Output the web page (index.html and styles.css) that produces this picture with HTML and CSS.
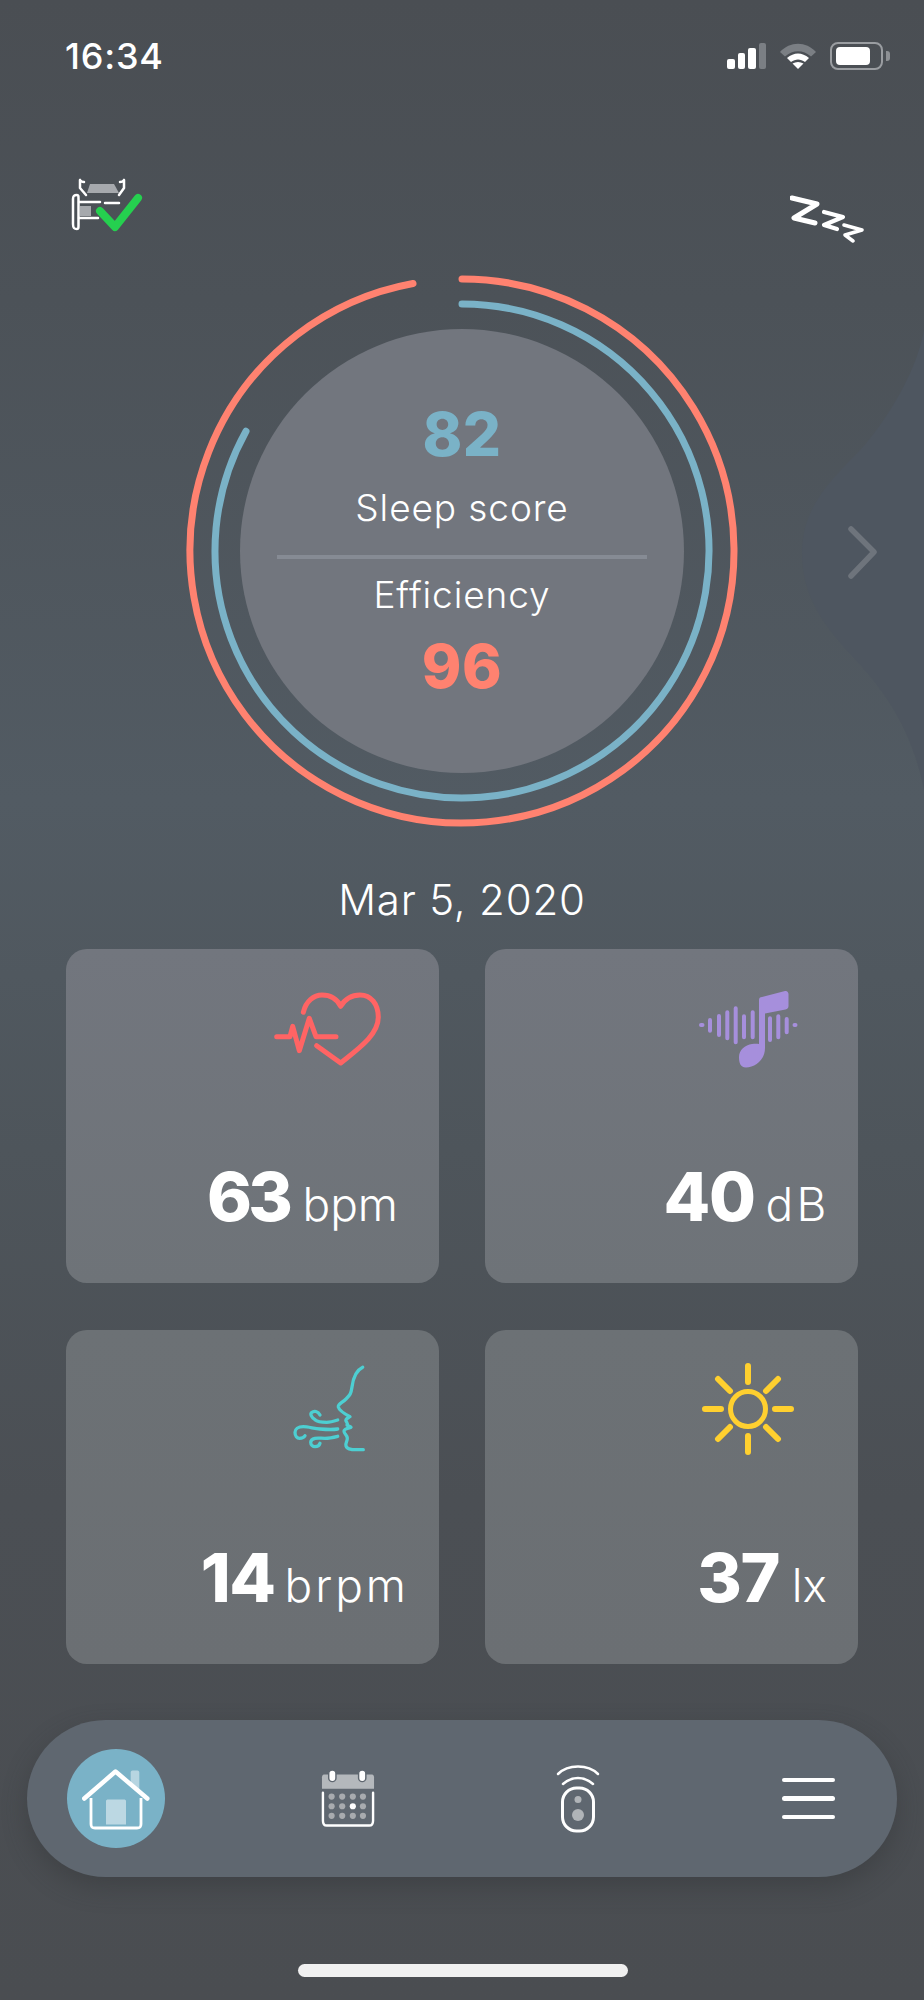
FILE: index.html
```html
<!DOCTYPE html>
<html lang="en">
<head>
<meta charset="utf-8">
<title>Sleep</title>
<link rel="stylesheet" href="styles.css">
</head>
<body>
<main class="screen">
  <svg class="wave" viewBox="0 0 124 460" aria-hidden="true">
    <path class="wave-shape" d="M124 0C118 34 96 78 63 117C34 148 2 174 2 223C2 268 26 298 53 327C86 362 112 400 124 460Z"/>
    <path class="chev" d="M51 199L74 222L51 246"/>
  </svg>

  <header class="status">
    <span class="time">16:34</span>
    <div class="status-icons">
      <div class="signal"><i class="b1"></i><i class="b2"></i><i class="b3"></i><i class="b4"></i></div>
      <svg class="wifi" viewBox="0 0 38 26">
        <path class="wifi-off" d="M1 9C11 -2 27 -2 37 9L32 13.500C24 6.500 14 6.500 6 13.500Z"/>
        <path class="wifi-on" d="M8 15C15 9 23 9 30 15L26 19C21.500 15.500 16.500 15.500 12 19Z"/>
        <path class="wifi-on" d="M13.500 20.500C17 18.500 21 18.500 24.500 20.500L19 26Z"/>
      </svg>
      <div class="battery"><div class="battery-fill"></div></div>
      <div class="battery-nub"></div>
    </div>
  </header>

  <div class="top-row">
    <svg class="bed" viewBox="0 0 70 54">
      <g class="bed-line">
        <path d="M8 2V10L14 17M8 2C9 4 10 4 12 4"/>
        <path d="M52 2V10L47 17M52 2C51 4 50 4 48 4"/>
        <path d="M5 17C2 17 1 18 1 21V46C1 50 2 51 5 51C6.500 51 6.500 50 6.500 47V21C6.500 18 6.500 17 5 17Z"/>
        <path d="M7 24H28M7 40H26M33 25H47"/>
      </g>
      <path class="bed-fill" d="M18 6H42L47 15H15Z"/>
      <path class="bed-fill" d="M8 28H19V38H8Z"/>
      <path class="check-line" d="M28 33L43 49L66 20"/>
    </svg>
    <svg class="zzz" viewBox="0 0 74 48">
      <path class="z1" d="M2 3L27 9L4 23L25 28"/>
      <path class="z2" d="M34 17L53 22L34 30L47 34"/>
      <path class="z3" d="M54 30L72 35L55 40L63 46"/>
    </svg>
  </div>

  <section class="gauge">
    <svg class="rings" viewBox="0 0 560 560">
      <path class="ring ring-red" d="M280 8A272 272 0 1 1 231 12.450"/>
      <path class="ring ring-blue" d="M280 33A247 247 0 1 1 64 160.200"/>
    </svg>
    <div class="disc">
      <div class="score score-blue">82</div>
      <div class="score-label">Sleep score</div>
      <div class="divider"></div>
      <div class="score-label eff">Efficiency</div>
      <div class="score score-red">96</div>
    </div>
  </section>

  <div class="date">Mar 5, 2020</div>

  <section class="cards">
    <article class="card card-bpm">
      <svg class="card-icon heart" viewBox="0 0 115 80">
        <path class="hr" d="M33.300 23.300C36 12 44 6 52 6C60 6 67 10 70.700 17.300C75 10 82 6 90 6C101 6 108.300 15 108.300 28.300C108.300 46 88 60 70.700 74L46.700 56.700"/>
        <path class="hr" d="M6.700 47.700H20L22.700 37.300L29.300 61.700L39.300 29.300L46 47.700H66"/>
      </svg>
      <div class="value"><b>63</b> <span>bpm</span></div>
    </article>
    <article class="card card-db">
      <svg class="card-icon music" viewBox="0 0 110 90">
        <path class="note" d="M69 16C69 14 70 13 72 13L95 7C97 6.500 98.500 8 98.500 10V22C98.500 24 97.500 25 95.500 25.500L75 29.500V64C75 76 65 83.500 56 83.500C50 83.500 49 78 49 73C49 66 55 61 62 60C65 59.500 67 59.500 69 60Z"/>
        <path class="bars" d="M11 41H12.500M20 36V46.700M29 32V51M37.300 28.300V54.300M45.700 24.300V58.300M54 32.300V53.300M62.700 28.300V53.300M80 34.300V56M88.300 32.300V53.300M96.700 35V48.300M104.500 41H105.500"/>
      </svg>
      <div class="value"><b>40</b> <span>dB</span></div>
    </article>
    <article class="card card-brpm">
      <svg class="card-icon breath" viewBox="0 0 76 100">
        <path d="M72.700 8.300C65 12 63 20 62 28C61 35 60 36 56 40C52 44 48 45 48.300 48C49 51 53 54 60 57.700C58 59 55 60 56 62C57 64 58 64 57 66C58 67 60 67 61 68.300C58 69 54 70 54 72C54 75 57 76 57.300 79C57.500 83 55 84 56 87C57 90 59 90 62 90.500L73.300 90.700"/>
        <path d="M47.700 61C43 62.500 40 63.300 36.700 63.300C31 63.300 27 62.500 25 60.700C21 58 20 55 21.700 53.500C24 51.500 28 52 30 56"/>
        <path d="M47.700 70C42 71 36 70.500 30 70C24 69.500 18 67.700 13.300 67.700C8 67.700 5 70 5 73.300C5 77 7 79.300 9.500 79.300C12 79.300 14 78.500 15 76.700"/>
        <path d="M47.700 77.300C43 78.500 39 79.300 35 79.300C31 79.300 28 78.800 25 79.300C22 80 20.700 81.500 20.700 83.300C20.700 86 23 87.700 25 87.700C27.500 87.700 29.500 86 30 84.300"/>
      </svg>
      <div class="value"><b>14</b> <span>brpm</span></div>
    </article>
    <article class="card">
      <svg class="card-icon sun" viewBox="0 0 96 96">
        <circle class="sun-core" cx="48" cy="48" r="17.500"/>
        <path d="M48 5V21M48 75V91M5 48H21M75 48H91M18 18L30 30M78 18L66 30M18 78L30 66M78 78L66 66"/>
      </svg>
      <div class="value"><b>37</b> <span>lx</span></div>
    </article>
  </section>

  <nav class="nav">
    <div class="nav-home">
      <svg class="home-icon" viewBox="0 0 70 62">
        <path class="home-chim" d="M51.500 2.500H56.500C57.500 2.500 58.300 3.300 58.300 4.500V24L49.700 17V4.500C49.700 3.300 50.500 2.500 51.500 2.500Z"/>
        <path class="home-door" d="M25 33C25 32 26 31.500 27 31.500H43C44 31.500 45 32 45 33V56.500H25Z"/>
        <path class="home-body" d="M10 30V56C10 59 11 60 14 60H56C59 60 60 59 60 56V30"/>
        <path class="home-roof" d="M3.300 30.500L34.500 3.500L66.300 30.500"/>
      </svg>
    </div>
    <svg class="cal" viewBox="0 0 56 60">
      <path class="cal-head" d="M3 5H53C54 5 55 6 55 8V20H1V8C1 6 2 5 3 5Z"/>
      <rect class="cal-ring" x="8" y="0.500" width="7.500" height="12" rx="3.700"/>
      <rect class="cal-ring" x="39" y="0.500" width="7.500" height="12" rx="3.700"/>
      <path class="cal-body" d="M2 24V53C2 56 3 58 6 58H50C53 58 54 56 54 53V24"/>
      <g class="cal-dots">
        <circle cx="11" cy="28" r="3.200"/><circle cx="22" cy="28" r="3.200"/><circle cx="33" cy="28" r="3.200"/><circle cx="43.500" cy="28" r="3.200"/>
        <circle cx="11" cy="38" r="3.200"/><circle cx="22" cy="38" r="3.200"/><circle cx="43.500" cy="38" r="3.200"/>
        <circle cx="11" cy="48" r="3.200"/><circle cx="22" cy="48" r="3.200"/><circle cx="33" cy="48" r="3.200"/><circle cx="43.500" cy="48" r="3.200"/>
      </g>
      <circle class="cal-today" cx="33" cy="38" r="3.200"/>
    </svg>
    <svg class="remote" viewBox="0 0 44 68">
      <path class="rm-line thin" d="M2 9C12 -1 32 -1 42 9"/>
      <path class="rm-line thin" d="M7 19C16 11 28 11 37 19"/>
      <rect class="rm-line" x="6.500" y="23" width="31" height="43" rx="14"/>
      <circle class="rm-dot" cx="22" cy="34.500" r="3.500"/>
      <circle class="rm-dot" cx="22" cy="50" r="6"/>
    </svg>
    <div class="menu"><i></i><i></i><i></i></div>
  </nav>

  <div class="home-bar"></div>
</main>
</body>
</html>
```

FILE: styles.css
```css
* { box-sizing: border-box; }
html, body { margin: 0; padding: 0; }
body { font-family: Inter, "Liberation Sans", sans-serif; color: #fff; }

.screen {
  position: relative;
  width: 924px;
  height: 2000px;
  overflow: hidden;
  display: flex;
  flex-direction: column;
  background: linear-gradient(180deg, #4a4e53 0, #4c5258 300px, #525b63 800px, #4e555b 1150px, #4b4f54 1500px, #4a4d51 2000px);
}

.wave { position: absolute; right: 0; top: 330px; width: 124px; height: 460px; }
.wave-shape { fill: #4e5660; }
.chev { fill: none; stroke: #6e747c; stroke-width: 5.500; stroke-linecap: round; stroke-linejoin: round; }

.status {
  height: 42px;
  margin-top: 35px;
  padding: 0 34px 0 65px;
  display: flex;
  justify-content: space-between;
  align-items: center;
  position: relative;
}
.time { font-size: 36px; font-weight: 500; line-height: 42px; letter-spacing: 0.8px; }
.status-icons { display: flex; align-items: center; }
.signal { display: flex; align-items: flex-end; gap: 3px; height: 26px; margin-right: 13px; }
.signal i { display: block; width: 7.500px; border-radius: 2px; background: #fff; }
.signal .b1 { height: 10px; }
.signal .b2 { height: 16px; }
.signal .b3 { height: 21px; }
.signal .b4 { height: 26px; background: #7b7f84; }
.wifi { width: 38px; height: 26px; margin-right: 13px; }
.wifi-off { fill: #7b7f84; }
.wifi-on { fill: #fff; }
.battery { width: 53px; height: 28px; border: 2px solid #9a9da1; border-radius: 8px; padding: 3px 4px; }
.battery-fill { width: 34px; height: 100%; background: #fff; border-radius: 4px; }
.battery-nub { width: 4px; height: 10px; margin-left: 3px; background: #8d9094; border-radius: 0 3px 3px 0; }

.top-row {
  display: flex;
  justify-content: space-between;
  padding: 0 60px 0 72px;
  margin-top: 101px;
  height: 70px;
  position: relative;
}
.bed { width: 70px; height: 54px; overflow: visible; }
.bed-line { fill: none; stroke: #fff; stroke-width: 2.500; stroke-linecap: round; stroke-linejoin: round; }
.bed-fill { fill: #a6a9ad; }
.check-line { fill: none; stroke: #25d04f; stroke-width: 8; stroke-linecap: round; stroke-linejoin: round; }
.zzz { width: 74px; height: 48px; margin-top: 17px; fill: none; stroke: #fff; stroke-linecap: round; stroke-linejoin: round; }
.z1 { stroke-width: 5; }
.z2 { stroke-width: 4.200; }
.z3 { stroke-width: 3.500; }

.gauge {
  position: relative;
  width: 560px;
  height: 560px;
  margin: 23px 0 0 182px;
  display: flex;
  align-items: center;
  justify-content: center;
}
.rings { position: absolute; left: 0; top: 0; width: 560px; height: 560px; }
.ring { fill: none; stroke-width: 7; stroke-linecap: round; }
.ring-red { stroke: #ff8270; }
.ring-blue { stroke: #7ab2c7; }
.disc {
  position: relative;
  width: 444px;
  height: 444px;
  border-radius: 50%;
  background: #72767e;
  display: flex;
  flex-direction: column;
  align-items: center;
}
.score { font-size: 60px; font-weight: 800; line-height: 60px; letter-spacing: 0.5px; }
.score-blue { color: #7ab2c7; margin-top: 75px; }
.score-red { color: #ff8270; margin-top: 20px; }
.score-label { font-size: 37px; font-weight: 300; line-height: 42px; letter-spacing: 0.9px; margin-top: 23px; }
.divider { width: 370px; height: 4px; background: #868b94; margin-top: 26px; }
.eff { margin-top: 15px; }

.date { font-size: 42px; font-weight: 300; line-height: 48px; text-align: center; margin-top: 45px; letter-spacing: 0.8px; }

.cards {
  display: grid;
  grid-template-columns: 373px 373px;
  grid-auto-rows: 334px;
  gap: 47px 46px;
  padding-left: 66px;
  margin-top: 25px;
}
.card {
  position: relative;
  border-radius: 21px;
  background: linear-gradient(180deg, #72767e, #6e7378);
  padding: 0 31px 47px 0;
  display: flex;
  align-items: flex-end;
  justify-content: flex-end;
}
.card:nth-child(n+3) { background: linear-gradient(180deg, #6c7175, #6b6f73); }
.value { font-size: 46px; font-weight: 300; line-height: 64px; white-space: nowrap; }
.value b { font-size: 68px; font-weight: 800; letter-spacing: -1.5px; }
.card-bpm { padding-right: 41px; }
.card-bpm b { letter-spacing: -3.500px; }
.card-db { padding-right: 28px; }
.card-db span { letter-spacing: 3.500px; margin-left: -2px; }
.card-brpm { padding-right: 30px; }
.card-brpm span { letter-spacing: 3px; margin-left: -3px; }
.card-icon { position: absolute; overflow: visible; }
.heart { left: 204px; top: 40px; width: 115px; height: 80px; }
.hr { fill: none; stroke: #ff6464; stroke-width: 5; stroke-linecap: round; stroke-linejoin: round; }
.music { left: 205px; top: 35px; width: 110px; height: 90px; }
.note { fill: #a68fdc; }
.bars { fill: none; stroke: #a68fdc; stroke-width: 4; stroke-linecap: round; }
.breath { left: 224px; top: 29px; width: 76px; height: 100px; fill: none; stroke: #4dcfd2; stroke-width: 3.300; stroke-linecap: round; stroke-linejoin: round; }
.sun { left: 215px; top: 31px; width: 96px; height: 96px; fill: none; stroke: #ffd02f; stroke-width: 6; stroke-linecap: round; }
.sun-core { stroke-width: 5; }

.nav {
  position: absolute;
  left: 27px;
  top: 1720px;
  width: 870px;
  height: 157px;
  border-radius: 79px;
  background: #5f6770;
  box-shadow: 0 10px 24px rgba(50, 53, 56, 0.45);
  display: flex;
  align-items: center;
}
.nav-home {
  width: 98px;
  height: 99px;
  margin-left: 40px;
  border-radius: 50%;
  background: #7ab2c7;
  display: flex;
  align-items: center;
  justify-content: center;
}
.home-icon { width: 70px; height: 62px; overflow: visible; }
.home-chim { fill: #b7d5e1; }
.home-door { fill: #bcd8e3; }
.home-body { fill: none; stroke: #fff; stroke-width: 2.800; stroke-linejoin: round; }
.home-roof { fill: none; stroke: #fff; stroke-width: 4.500; stroke-linecap: round; stroke-linejoin: round; }
.cal { width: 54px; height: 59px; margin-left: 156px; }
.cal-head { fill: #b4b8bc; }
.cal-ring { fill: #fff; stroke: #5f6770; stroke-width: 1.500; }
.cal-body { fill: none; stroke: #fff; stroke-width: 2.500; stroke-linecap: round; }
.cal-dots { fill: #a8abaf; }
.cal-today { fill: #fff; }
.remote { width: 44px; height: 68px; margin-left: 181px; overflow: visible; }
.rm-line { fill: none; stroke: #fff; stroke-width: 3; stroke-linecap: round; }
.rm-line.thin { stroke-width: 2.500; }
.rm-dot { fill: #b0b4b8; }
.menu { display: flex; flex-direction: column; gap: 14px; margin-left: 182px; width: 53px; }
.menu i { display: block; height: 4.500px; background: #fff; border-radius: 3px; }

.home-bar {
  position: absolute;
  left: 298px;
  top: 1964px;
  width: 330px;
  height: 13px;
  background: #f0f0f0;
  border-radius: 7px;
}
```
